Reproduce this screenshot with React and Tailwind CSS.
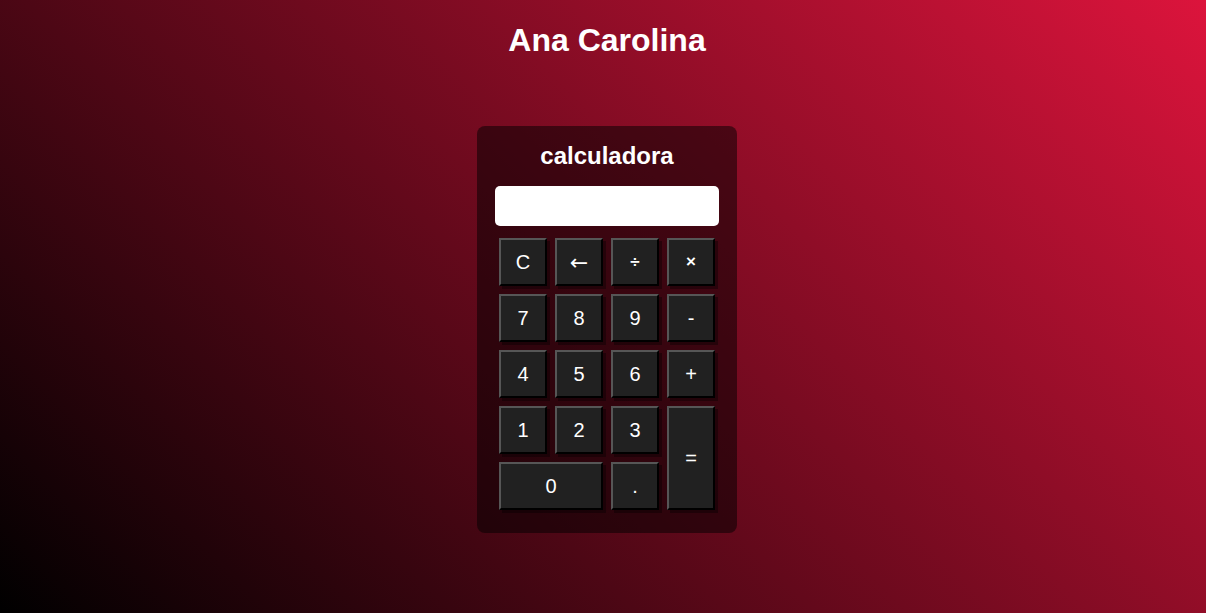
const keys = [
  { label: "C" },
  { label: "←", arrow: true },
  { label: "÷", small: true },
  { label: "×", small: true },
  { label: "7" },
  { label: "8" },
  { label: "9" },
  { label: "-" },
  { label: "4" },
  { label: "5" },
  { label: "6" },
  { label: "+" },
  { label: "1" },
  { label: "2" },
  { label: "3" },
  { label: "=", tall: true },
  { label: "0", wide: true },
  { label: "." },
];

function Key({ label, wide, tall, small, arrow }) {
  return (
    <button
      className={
        "flex items-center justify-center bg-[#212121] text-white border-2 border-t-[#565656] border-l-[#565656] border-r-black border-b-black shadow-[3px_3px_0_rgba(0,0,0,0.35)] " +
        (small ? "text-[17px] font-bold " : arrow ? "text-[22px] font-['DejaVu_Sans'] " : "text-[20px] ") +
        (wide ? "col-span-2 " : "") +
        (tall ? "row-span-2 " : "")
      }
    >
      {label}
    </button>
  );
}

export default function App() {
  return (
    <div className="min-h-screen bg-[linear-gradient(45deg,#000000,#dc143c)] font-['Liberation_Sans',Arial,sans-serif] pt-[22px] pl-[8px]">
      <h1 className="text-center text-white font-bold text-[32px] leading-[37px]">Ana Carolina</h1>

      <div className="mx-auto mt-[67px] w-[260px] rounded-lg bg-black/50 px-[18px] pt-[16px] pb-[23px]">
        <h2 className="text-center text-white font-bold text-[24px] leading-[28px]">calculadora</h2>
        <div className="mt-[16px] h-[40px] w-full rounded-[5px] bg-white"></div>
        <div className="mt-[12px] mx-auto grid w-[216px] grid-cols-[repeat(4,48px)] auto-rows-[48px] gap-[8px]">
          {keys.map((k) => (
            <Key key={k.label} {...k} />
          ))}
        </div>
      </div>
    </div>
  );
}
